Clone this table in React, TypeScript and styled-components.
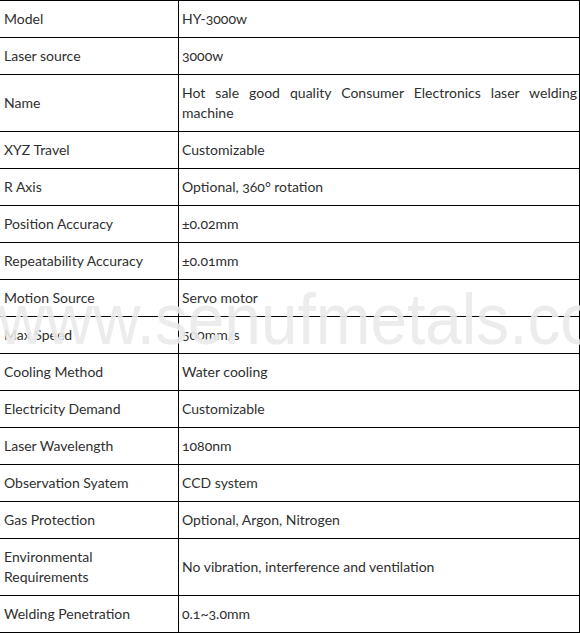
import React from 'react';
import styled, { createGlobalStyle } from 'styled-components';

const GlobalStyle = createGlobalStyle`
  html, body {
    margin: 0;
    padding: 0;
    background: #ffffff;
  }
`;

type Spec = {
  label: React.ReactNode;
  value: string;
  justify?: boolean;
};

const specs: Spec[] = [
  { label: 'Model', value: 'HY-3000w' },
  { label: 'Laser source', value: '3000w' },
  {
    label: 'Name',
    value: 'Hot sale good quality Consumer Electronics laser welding machine',
    justify: true,
  },
  { label: 'XYZ Travel', value: 'Customizable' },
  { label: 'R Axis', value: 'Optional, 360° rotation' },
  { label: 'Position Accuracy', value: '±0.02mm' },
  { label: 'Repeatability Accuracy', value: '±0.01mm' },
  { label: 'Motion Source', value: 'Servo motor' },
  { label: 'Max Speed', value: '500mm/s' },
  { label: 'Cooling Method', value: 'Water cooling' },
  { label: 'Electricity Demand', value: 'Customizable' },
  { label: 'Laser Wavelength', value: '1080nm' },
  { label: 'Observation Syatem', value: 'CCD system' },
  { label: 'Gas Protection', value: 'Optional, Argon, Nitrogen' },
  {
    label: (
      <>
        Environmental
        <br />
        Requirements
      </>
    ),
    value: 'No vibration, interference and ventilation',
  },
  { label: 'Welding Penetration', value: '0.1~3.0mm' },
];

function App() {
  return (
    <>
      <GlobalStyle />
      <Page>
        <SpecTable>
          <colgroup>
            <col style={{ width: 179 }} />
            <col />
          </colgroup>
          <tbody>
            {specs.map((s, i) => (
              <tr key={i}>
                <LabelCell>{s.label}</LabelCell>
                <ValueCell justify={s.justify}>{s.value}</ValueCell>
              </tr>
            ))}
          </tbody>
        </SpecTable>
        <Watermark>www.senufmetals.com</Watermark>
      </Page>
    </>
  );
}

export default App;

const Page = styled.div`
  position: relative;
  width: 580px;
  height: 633px;
  overflow: hidden;
`;

const SpecTable = styled.table`
  border-collapse: collapse;
  table-layout: fixed;
  width: 581px;
  margin-left: -1px;
  font-family: Lato, 'Open Sans', sans-serif;
  font-size: 14px;
  font-variant-numeric: oldstyle-nums;
  color: #2f2f2f;
`;

const Cell = styled.td`
  border: 1px solid #000000;
  padding: 8px 3px 8px 4px;
  line-height: 20px;
  vertical-align: middle;
`;

const LabelCell = styled(Cell)`
  text-align: left;
`;

const ValueCell = styled(Cell)<{ justify?: boolean }>`
  padding-left: 3px;
  padding-right: 2px;
  text-align: ${(p) => (p.justify ? 'justify' : 'left')};
`;

const Watermark = styled.div`
  position: absolute;
  left: -2px;
  top: 282px;
  white-space: nowrap;
  font-family: 'Liberation Sans Narrow', 'Liberation Sans', sans-serif;
  font-size: 73px;
  line-height: 1;
  font-weight: 400;
  transform: scaleX(0.9);
  transform-origin: left center;
  color: #ebebeb;
  opacity: 0.9;
  text-shadow: 0 0 1px #ffffff;
  pointer-events: none;
`;
